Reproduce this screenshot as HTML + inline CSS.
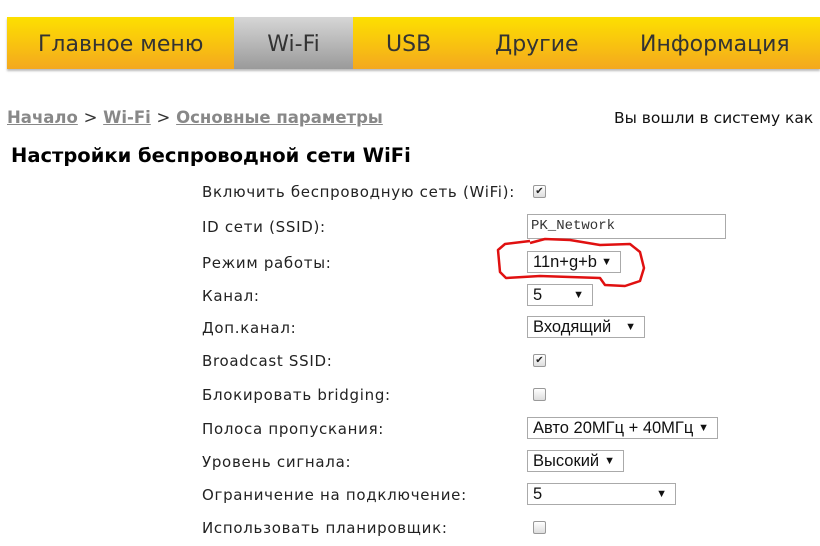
<!DOCTYPE html><html><head><meta charset="utf-8"><style>
body{margin:0;width:820px;height:546px;overflow:hidden;background:#fff;font-family:"Liberation Sans",Arial,sans-serif;position:relative}
.nav{position:absolute;left:7px;top:17px;width:813px;height:52px;background:linear-gradient(#fde000,#f4a81e);box-shadow:0 2px 2px #bbb}
.nav div{position:absolute;top:0;height:52px;line-height:56px;font-family:"DejaVu Sans",sans-serif;font-size:22px;color:#333}
.wifi{left:227px;width:119px;background:linear-gradient(#d6d6d6,#9a9a9a);text-align:center}
.bc{position:absolute;left:7px;top:108px;font-family:"DejaVu Sans",sans-serif;font-weight:bold;font-size:16.5px;color:#888}
.bc a{color:#888;text-decoration:underline}
.bc span{color:#333;font-weight:normal}
.login{position:absolute;left:614px;top:109px;color:#111;white-space:nowrap;font-family:"DejaVu Sans",sans-serif;font-size:15.5px}
h1{position:absolute;left:11px;top:144px;margin:0;font-family:"DejaVu Sans",sans-serif;font-size:19.5px;font-weight:bold;color:#000}
.l{position:absolute;left:202px;font-family:"DejaVu Sans",sans-serif;font-size:15px;letter-spacing:0.7px;color:#222;white-space:nowrap}
.cb{position:absolute;left:533px;width:11px;height:11px;border:1px solid #999;border-radius:2px;background:linear-gradient(#fff,#ddd);font-size:10px;line-height:11px;text-align:center;color:#222}
.s{position:absolute;left:527px;border:1px solid #aaa;background:#fff;font-size:16.5px;line-height:20px;padding-left:5px;box-sizing:border-box;height:22px;color:#111}
.s i{position:absolute;right:8px;top:0;font-style:normal;font-size:11px}
.t{position:absolute;left:527px;top:214px;width:199px;height:25px;border:1px solid #aaa;box-sizing:border-box;font-family:"Liberation Mono",monospace;font-size:14px;line-height:23px;padding-left:3px;color:#333}
</style></head><body>
<div class="nav">
<div style="left:31px">Главное меню</div>
<div class="wifi">Wi-Fi</div>
<div style="left:379px">USB</div>
<div style="left:488px">Другие</div>
<div style="left:633px">Информация</div>
</div>
<div class="bc"><a>Начало</a> <span>&gt;</span> <a>Wi-Fi</a> <span>&gt;</span> <a>Основные параметры</a></div>
<div class="login">Вы вошли в систему как</div>
<h1>Настройки беспроводной сети WiFi</h1>
<div class="l" style="top:183px">Включить беспроводную сеть (WiFi):</div><div class="cb" style="top:185px">✔</div>
<div class="l" style="top:218px">ID сети (SSID):</div><div class="t">PK_Network</div>
<div class="l" style="top:254px">Режим работы:</div><div class="s" style="top:251px;width:94px">11n+g+b<i>▼</i></div>
<div class="l" style="top:287px">Канал:</div><div class="s" style="top:284px;width:66px">5<i>▼</i></div>
<div class="l" style="top:319px">Доп.канал:</div><div class="s" style="top:316px;width:118px">Входящий<i>▼</i></div>
<div class="l" style="top:352px">Broadcast SSID:</div><div class="cb" style="top:354px">✔</div>
<div class="l" style="top:386px">Блокировать bridging:</div><div class="cb" style="top:388px"></div>
<div class="l" style="top:420px">Полоса пропускания:</div><div class="s" style="top:417px;width:191px">Авто 20МГц + 40МГц<i>▼</i></div>
<div class="l" style="top:453px">Уровень сигнала:</div><div class="s" style="top:450px;width:97px">Высокий<i>▼</i></div>
<div class="l" style="top:486px">Ограничение на подключение:</div><div class="s" style="top:483px;width:149px">5<i>▼</i></div>
<div class="l" style="top:519px">Использовать планировщик:</div><div class="cb" style="top:521px"></div>
<svg style="position:absolute;left:0;top:0" width="820" height="546"><path d="M530 241 L505 244 L498 250 L500 272 L506 278 L540 276 L600 278 L605 285 L625 286 L640 281 L644 268 L640 252 L630 244 L600 245 L570 240 L545 239 L530 243" fill="none" stroke="#e01010" stroke-width="2.5" stroke-linejoin="round"/></svg>
</body></html>
